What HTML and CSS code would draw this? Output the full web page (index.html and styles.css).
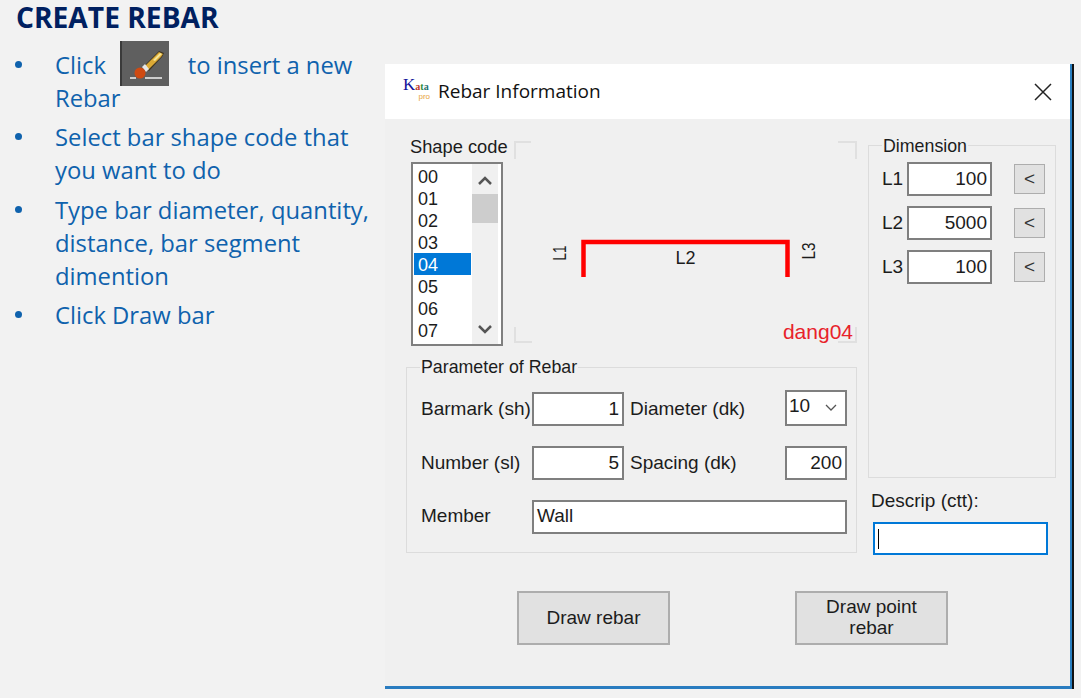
FILE: index.html
```html
<!DOCTYPE html>
<html lang="en">
<head>
  <meta charset="UTF-8" />
  <title>Create Rebar</title>
  <link rel="stylesheet" href="styles.css">
</head>
<body>

<div class="slide">
  <div class="notes">
    <h1>CREATE REBAR</h1>
    <ul>
      <li><span>Click</span>
        <svg class="brush" width="49" height="45" viewBox="0 0 49 45">
          <rect width="49" height="45" fill="#5f5f5f"/>
          <rect width="2" height="45" fill="#3a3a3a"/>
          <path d="M24 25 L39 10 L44 12 L42 16 L29 30 Z" fill="#3d3320"/>
          <path d="M25 25 L39 11 L43 13 L41 16 L28 29 Z" fill="#dba935"/>
          <path d="M33 19 L40 12 L42 13 L35 20 Z" fill="#f6e596"/>
          <path d="M22 26 L25 23 L29 28 L26 31 Z" fill="#e6e6e6"/>
          <circle cx="20" cy="32" r="5.5" fill="#cf4a12"/>
          <path d="M10 37 H16 M25 37 H42" stroke="#f2f2f2" stroke-width="1.5"/>
        </svg>
        <span>to insert a new</span> <span>Rebar</span></li>
      <li>Select bar shape code that you want to do</li>
      <li>Type bar diameter, quantity, distance, bar segment dimention</li>
      <li>Click Draw bar</li>
    </ul>
  </div>

  <div class="dialog">
    <div class="titlebar">
      <div class="logo">
        <div class="logo-name"><span class="k">K</span><span class="a1">a</span><span class="a2">t</span><span class="a3">a</span></div>
        <div class="logo-pro">pro</div>
      </div>
      <span class="dialog-title">Rebar Information</span>
      <svg class="close" width="18" height="18" viewBox="0 0 18 18">
        <path d="M1 1 L17 17 M17 1 L1 17" stroke="#222" stroke-width="1.5" fill="none"/>
      </svg>
    </div>

    <div class="dialog-body">
      <div class="left-col">
        <div class="top-row">
          <div class="shape-col">
            <div class="shape-label">Shape code</div>
            <div class="listbox">
              <div class="list-items">
                <div class="list-item">00</div>
                <div class="list-item">01</div>
                <div class="list-item">02</div>
                <div class="list-item">03</div>
                <div class="list-item active">04</div>
                <div class="list-item">05</div>
                <div class="list-item">06</div>
                <div class="list-item">07</div>
              </div>
              <div class="scrollbar">
                <svg class="chev" width="16" height="10" viewBox="0 0 16 10"><path d="M2 8 L8 2 L14 8" stroke="#555" stroke-width="2.5" fill="none"/></svg>
                <div class="thumb"></div>
                <svg class="chev chev-down" width="16" height="10" viewBox="0 0 16 10"><path d="M2 2 L8 8 L14 2" stroke="#555" stroke-width="2.5" fill="none"/></svg>
              </div>
            </div>
          </div>

          <svg class="preview" width="343" height="202" viewBox="0 0 343 202">
            <path d="M1 18 V1 H17 M324 1 H342 V18 M1 186 V201 H18 M324 201 H342 V186" stroke="#e0e0e0" stroke-width="2" fill="none"/>
            <path d="M69.5 136 V101 H273.5 V136" stroke="#ff0000" stroke-width="4.5" fill="none"/>
            <text class="dim-text" x="171.500" y="123" text-anchor="middle">L2</text>
            <text class="dim-text" transform="translate(52 112) rotate(-90) scale(0.75 1)" x="0" y="0" text-anchor="middle">L1</text>
            <text class="dim-text" transform="translate(301 110) rotate(-90) scale(0.85 1)" x="0" y="0" text-anchor="middle">L3</text>
            <text class="shape-name" x="339" y="198" text-anchor="end">dang04</text>
          </svg>
        </div>

        <div class="group param-group">
          <span class="group-title">Parameter of Rebar</span>
          <div class="param-grid">
            <span class="lbl">Barmark (sh)</span>
            <div class="field num">1</div>
            <span class="lbl">Diameter (dk)</span>
            <div class="field combo">
              <span class="combo-value">10</span>
              <svg width="12" height="8" viewBox="0 0 12 8"><path d="M1 1 L6 6 L11 1" stroke="#555" stroke-width="1.3" fill="none"/></svg>
            </div>

            <span class="lbl">Number (sl)</span>
            <div class="field num">5</div>
            <span class="lbl">Spacing (dk)</span>
            <div class="field num">200</div>

            <span class="lbl member">Member</span>
            <div class="field wide">Wall</div>
          </div>
        </div>
      </div>

      <div class="right-col">
        <div class="group dim-group">
          <span class="group-title">Dimension</span>
          <div class="dim-row">
            <span class="lbl">L1</span>
            <div class="field num">100</div>
            <div class="pick">&lt;</div>
          </div>
          <div class="dim-row">
            <span class="lbl">L2</span>
            <div class="field num">5000</div>
            <div class="pick">&lt;</div>
          </div>
          <div class="dim-row">
            <span class="lbl">L3</span>
            <div class="field num">100</div>
            <div class="pick">&lt;</div>
          </div>
        </div>
        <div class="descrip-label">Descrip (ctt):</div>
        <div class="field descrip"><span class="caret"></span></div>
      </div>

      <div class="buttons">
        <div class="btn">Draw rebar</div>
        <div class="btn">Draw point<br>rebar</div>
      </div>
    </div>
  </div>
</div>

</body>
</html>
```

FILE: styles.css
```css
html, body {
  margin: 0;
  padding: 0;
}

body {
  width: 1081px;
  height: 698px;
  overflow: hidden;
  background: #f2f2f2;
}

.slide {
  display: flex;
  align-items: flex-start;
}

/* left text column */
.notes {
  width: 385px;
  flex: none;
  font-family: "Open Sans", sans-serif;
  color: #0f62ad;
}

.notes h1 {
  margin: 0;
  padding: 0 0 0 16px;
  font-size: 28.2px;
  line-height: 35px;
  font-weight: 700;
  color: #002060;
}

.notes ul {
  list-style: none;
  margin: 14px 0 0;
  padding: 0 0 0 55px;
  font-size: 23.8px;
  line-height: 33px;
}

.notes li {
  margin-bottom: 6.3px;
  width: 320px;
  position: relative;
}

.notes li::before {
  content: "";
  position: absolute;
  left: -40px;
  top: 12px;
  width: 7px;
  height: 7px;
  border-radius: 50%;
  background: #0f62ad;
}

.brush {
  vertical-align: middle;
  margin: -14px 13px -6px 7.5px;
}

/* dialog */
.dialog {
  width: 685px;
  height: 622px;
  margin-top: 64px;
  background: #f0f0f0;
  border-right: 2px solid #2a7fc0;
  border-bottom: 3px solid #2a7cc0;
  box-shadow: 2px 0 0 #111;
  font-family: "Liberation Sans", Arial, sans-serif;
  font-size: 19px;
  color: #1c1c1c;
}

.titlebar {
  height: 55px;
  background: #fff;
  display: flex;
  align-items: center;
  padding: 0 18px 0 18px;
}

.logo {
  width: 27px;
  margin-top: -6px;
  line-height: 1;
}

.logo-name {
  font-family: "Liberation Serif", serif;
  font-size: 10px;
  font-weight: 700;
  height: 17px;
  white-space: nowrap;
}

.logo-name .k { color: #14149a; font-size: 17px; font-weight: 400; }
.logo-name .a1 { color: #c0392b; }
.logo-name .a2 { color: #2e8b3a; }
.logo-name .a3 { color: #1d6f6f; }

.logo-pro {
  font-family: "Liberation Sans", sans-serif;
  font-size: 8px;
  color: #e8a33a;
  text-align: right;
}

.dialog-title {
  font-family: "Open Sans", sans-serif;
  font-size: 19px;
  margin: -2px 0 0 8px;
  color: #111;
  flex: 1;
}

.dialog-body {
  display: grid;
  grid-template-columns: 451px 188px;
  column-gap: 11px;
  padding: 18px 0 0 21px;
}

.top-row {
  display: flex;
  align-items: flex-start;
}

.shape-col {
  width: 109px;
  padding-left: 4px;
  box-sizing: border-box;
}

.shape-label {
  font-size: 18.300px;
  line-height: 20px;
}

.listbox {
  display: flex;
  width: 92px;
  height: 184px;
  margin-top: 5px;
  margin-left: 1px;
  box-sizing: border-box;
  background: #fff;
  border: 2px solid #7f7f7f;
  padding-left: 1px;
  overflow: hidden;
}

.list-items {
  width: 57px;
  padding-top: 1px;
}

.list-item {
  height: 22px;
  line-height: 24px;
  padding-left: 4px;
  font-size: 18px;
}

.list-item.active {
  background: #0078d7;
  color: #fff;
}

.scrollbar {
  width: 26px;
  margin-left: 1px;
  background: #f0f0f0;
  display: flex;
  flex-direction: column;
  align-items: center;
}

.chev {
  margin-top: 12px;
  flex: none;
}

.chev-down {
  margin-top: auto;
  margin-bottom: 10px;
}

.thumb {
  width: 100%;
  height: 29px;
  margin-top: 8px;
  background: #cdcdcd;
}

.preview {
  display: block;
  margin-top: 4px;
  flex: none;
  overflow: visible;
}

.dim-text {
  font-family: "Liberation Sans", sans-serif;
  font-size: 18px;
  fill: #1c1c1c;
}

.shape-name {
  font-family: "Liberation Sans", sans-serif;
  font-size: 21px;
  fill: #e8222a;
}

/* group boxes */
.group {
  position: relative;
  box-sizing: border-box;
  border: 1px solid #dcdcdc;
}

.group-title {
  position: absolute;
  top: -11px;
  left: 13px;
  font-size: 17.800px;
  line-height: 20px;
  padding: 0 1px;
  background: #f0f0f0;
}

.param-group {
  height: 186px;
  margin-top: 21px;
}

.param-grid {
  display: grid;
  grid-template-columns: 111px 92px 161px 62px;
  grid-template-rows: 34px 34px 34px;
  row-gap: 20px;
  align-items: center;
  padding: 24px 0 0 14px;
}

.param-grid > .lbl:nth-child(4n + 3) {
  padding-left: 6px;
}

.param-grid .wide {
  grid-column: 2 / 5;
}

.lbl {
  white-space: nowrap;
}

.member {
  margin-top: -2px;
}

.field {
  box-sizing: border-box;
  height: 34px;
  line-height: 30px;
  background: #fff;
  border: 2px solid #7f7f7f;
  padding: 0 3px;
}

.wide {
  line-height: 28px;
}

.num {
  text-align: right;
}

.combo {
  display: flex;
  justify-content: space-between;
  align-items: center;
  height: 36px;
  margin-top: -2px;
  padding: 0 8px 0 2px;
}

.combo-value {
  margin-top: -4px;
}

.dim-group {
  height: 333px;
  margin-top: 8px;
  padding: 16px 0 0 13px;
}

.dim-group .group-title {
  top: -10px;
}

.dim-row {
  display: flex;
  align-items: center;
  height: 34px;
  margin-bottom: 10px;
}

.dim-row .lbl {
  width: 25px;
}

.dim-row .field {
  width: 85px;
}

.pick {
  width: 31px;
  height: 30px;
  line-height: 28px;
  margin-left: 22px;
  box-sizing: border-box;
  background: #e1e1e1;
  border: 1px solid #adadad;
  text-align: center;
  color: #333;
}

.descrip-label {
  margin: 13px 0 0 3px;
  line-height: 20px;
}

.descrip {
  width: 175px;
  margin: 11px 0 0 5px;
  height: 33px;
  border-color: #0078d7;
  display: flex;
  align-items: center;
}

.caret {
  width: 1px;
  height: 20px;
  background: #000;
}

.buttons {
  grid-column: 1 / 3;
  display: flex;
  gap: 125px;
  margin-top: 36px;
  padding-left: 111px;
}

.btn {
  width: 153px;
  height: 54px;
  box-sizing: border-box;
  background: #e1e1e1;
  border: 2px solid #adadad;
  padding-bottom: 2px;
  display: flex;
  align-items: center;
  justify-content: center;
  text-align: center;
  line-height: 21px;
}
```
